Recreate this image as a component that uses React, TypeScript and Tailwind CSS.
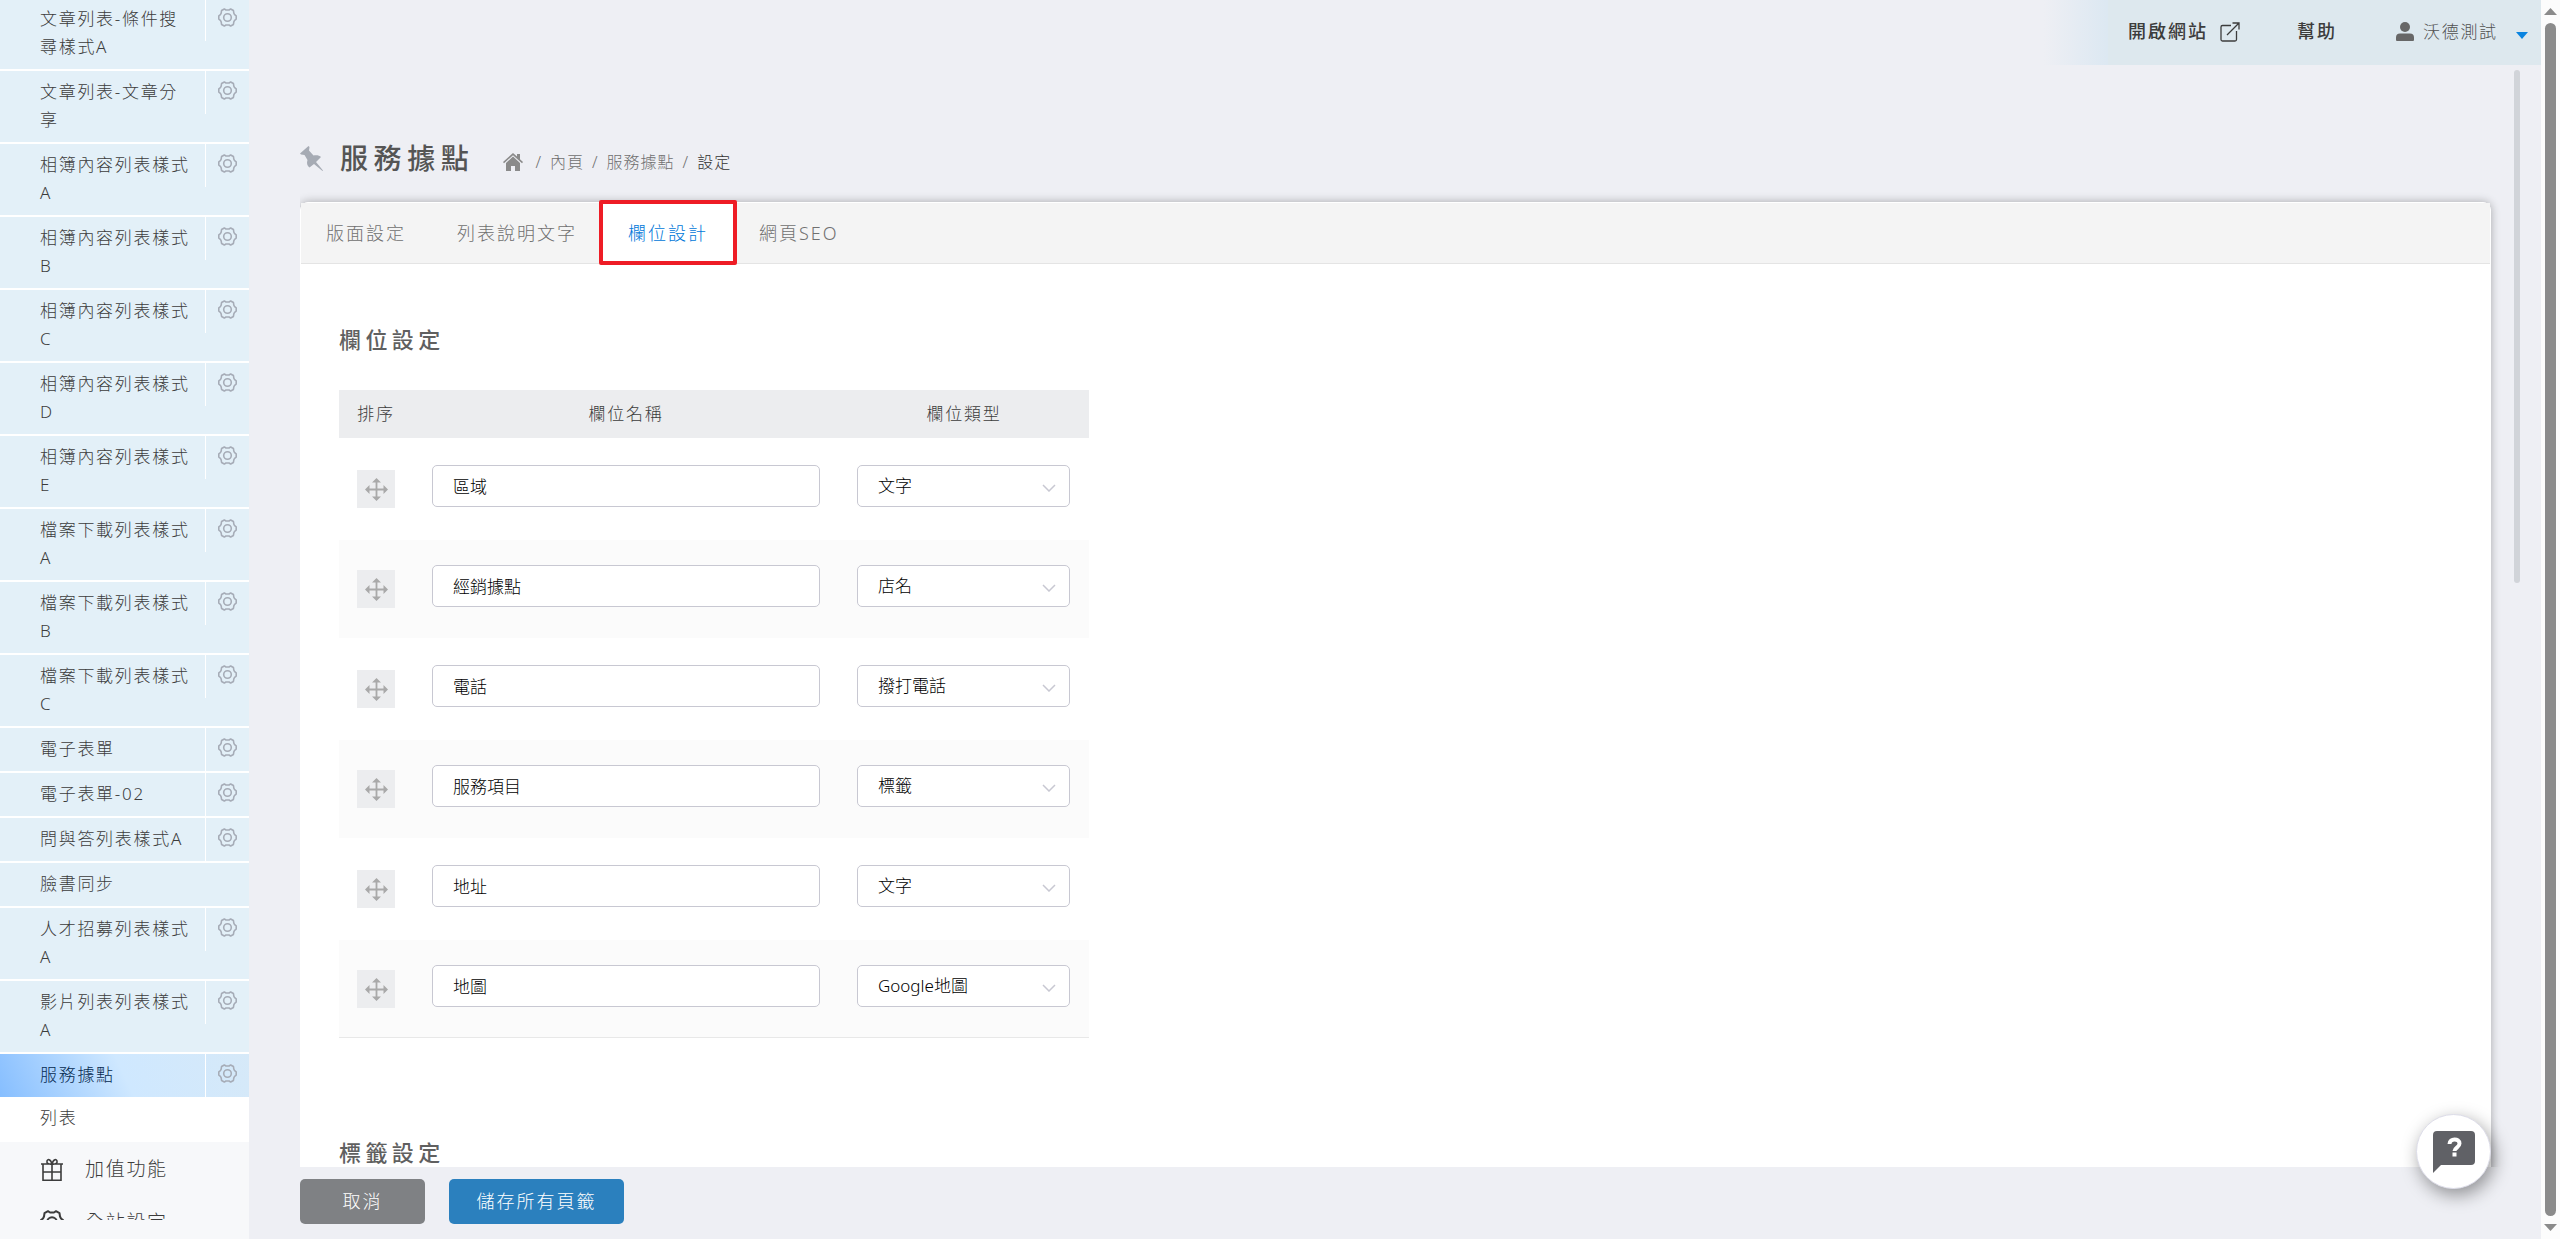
import type { ReactNode } from "react";

type MenuItem = { label: string; gear?: boolean; active?: boolean };

const menu: MenuItem[] = [
  { label: "文章列表-條件搜尋樣式A", gear: true },
  { label: "文章列表-文章分享", gear: true },
  { label: "相簿內容列表樣式A", gear: true },
  { label: "相簿內容列表樣式B", gear: true },
  { label: "相簿內容列表樣式C", gear: true },
  { label: "相簿內容列表樣式D", gear: true },
  { label: "相簿內容列表樣式E", gear: true },
  { label: "檔案下載列表樣式A", gear: true },
  { label: "檔案下載列表樣式B", gear: true },
  { label: "檔案下載列表樣式C", gear: true },
  { label: "電子表單", gear: true },
  { label: "電子表單-02", gear: true },
  { label: "問與答列表樣式A", gear: true },
  { label: "臉書同步" },
  { label: "人才招募列表樣式A", gear: true },
  { label: "影片列表列表樣式A", gear: true },
  { label: "服務據點", gear: true, active: true },
];

const fields = [
  { name: "區域", type: "文字" },
  { name: "經銷據點", type: "店名" },
  { name: "電話", type: "撥打電話" },
  { name: "服務項目", type: "標籤" },
  { name: "地址", type: "文字" },
  { name: "地圖", type: "Google地圖" },
];

const types = ["文字", "店名", "撥打電話", "標籤", "Google地圖"];

function Gear({ className }: { className?: string }) {
  return (
    <svg viewBox="0 0 24 24" className={className} fill="none" stroke="currentColor" strokeWidth="2" aria-hidden="true">
      <path d="M8 1.200 10 2.500h4l2-1.300 3.500 2 .5 3.300 1 2 2 1.500v4l-2 1.500-1 2-.5 3.300-3.500 2-2-1.300h-4l-2 1.300-3.500-2-.5-3.300-1-2-2-1.500v-4l2-1.500 1-2 .5-3.300z" strokeLinejoin="round" />
      <circle cx="12" cy="12" r="4.800" />
    </svg>
  );
}

function Sidebar() {
  return (
    <aside className="w-[249px] shrink-0 bg-[#f7f8fa] pb-[19px]">
      <nav className="h-full overflow-hidden text-[17px] leading-7 tracking-[0.1em] text-[#3c3c3c]">
        <ul className="-mt-0.5">
          {menu.map((m) => (
            <li
              key={m.label}
              className={
                m.active
                  ? "flex items-start bg-[linear-gradient(65deg,#86beff_0%,#cfe8ff_50%,#d6e9f8_100%)] text-[#062a50]"
                  : "flex items-start border-b-2 border-white bg-[#e3f0f8]"
              }
            >
              <a href="#" className="flex-1 pt-[7px] pb-2 pl-10 pr-3">{m.label}</a>
              {m.gear && (
                <button type="button" aria-label={m.label + " 設定"} className="flex h-[43px] w-11 items-center justify-center border-l border-white pr-px pb-1 text-[#a6acb7]">
                  <Gear className="size-[19px]" />
                </button>
              )}
            </li>
          ))}
        </ul>
        <a href="#" className="block bg-white pt-[7px] pb-2.5 pl-10">列表</a>
        <a href="#" className="flex h-[53px] items-center gap-[21px] pl-10 text-[19px]">
          <svg viewBox="0 0 24 24" className="size-6" fill="none" stroke="currentColor" strokeWidth="1.600" aria-hidden="true">
            <path d="M1 7h22M3 7v16.200h18V7M12 7v16M3 15h18M12 7C8 7.500 6.500 6 7 4s3.500-2.500 5 3c1.500-5.500 4.500-5 5-3s-1 3.500-5 3z" />
          </svg>
          加值功能
        </a>
        <a href="#" className="flex h-[53px] items-center gap-[21px] pl-10 text-[19px]">
          <Gear className="size-6" />
          全站設定
        </a>
      </nav>
    </aside>
  );
}

function TopBar() {
  return (
    <header className="flex h-[65px] shrink-0 justify-end text-[17px] text-[#3c3c3c]">
      <div className="w-16 bg-linear-to-r from-[#eeeff4] to-[#dce8f2]" />
      <div className="flex bg-[#dde8ee] pb-0.5">
        <a href="#" className="flex w-[169px] items-center gap-3 pl-5 text-[18px] font-medium tracking-[2px]">
          開啟網站
          <svg viewBox="0 0 20 20" className="size-5" fill="none" stroke="currentColor" strokeWidth="1.300" aria-hidden="true">
            <path d="M11 3.500H2.500a1.500 1.500 0 0 0-1.500 1.500v12.500A1.500 1.500 0 0 0 2.500 19H15a1.500 1.500 0 0 0 1.500-1.500V9M12.500 1H19v6.500M19 1 7 13" />
          </svg>
        </a>
        <a href="#" className="flex w-[95px] items-center pl-5 text-[18px] font-medium tracking-[2px]">幫助</a>
        <button type="button" className="flex w-[169px] items-center pl-6 tracking-[0.1em] text-[#505050]">
          <svg viewBox="0 0 18 19" className="mr-[9px] h-[19px] w-[18px] text-[#676767]" fill="currentColor" aria-hidden="true">
            <circle cx="9" cy="5" r="5" />
            <path d="M0 18v-2.500a4 4 0 0 1 4-4h10a4 4 0 0 1 4 4V18a1 1 0 0 1-1 1H1a1 1 0 0 1-1-1z" />
          </svg>
          沃德測試
          <svg viewBox="0 0 12 7" className="mt-2 ml-[18px] h-[7px] w-3 text-[#0a84e0]" fill="currentColor" aria-hidden="true">
            <path d="M0 0h12L6 7z" />
          </svg>
        </button>
      </div>
    </header>
  );
}

function Tab({ children, active }: { children: ReactNode; active?: boolean }) {
  return (
    <button
      type="button"
      role="tab"
      aria-selected={!!active}
      className={
        active
          ? "relative h-[60px] bg-white px-[25px] tracking-[2px] text-[#0077d9]"
          : "relative h-[60px] px-[25px] tracking-[2px] text-[#707070]"
      }
    >
      {children}
      {active && <span className="absolute -top-[3px] -right-1 -bottom-0.5 -left-1 rounded-xs border-4 border-[#ee1c25]" />}
    </button>
  );
}

function MoveIcon() {
  return (
    <svg viewBox="0 0 23 23" className="size-[23px]" aria-hidden="true">
      <path d="M11.500 3v17M3 11.500h17" stroke="currentColor" strokeWidth="1.800" />
      <path d="M11.500 0 16 4.500H7zM11.500 23 16 18.500H7zM0 11.500 4.500 7v9zM23 11.500 18.500 7v9z" fill="currentColor" />
    </svg>
  );
}

function FieldTable() {
  return (
    <table className="w-[750px] table-fixed border-collapse text-[17px]">
      <thead>
        <tr className="h-12 bg-[#ecedef] tracking-[0.1em] text-[#3c3c3c]">
          <th className="w-[74px] font-light">排序</th>
          <th className="w-[426px] font-light">欄位名稱</th>
          <th className="w-[250px] font-light">欄位類型</th>
        </tr>
      </thead>
      <tbody>
        {fields.map((f, i) => (
          <tr key={f.name} className="group h-[100px] align-top text-black">
            <td colSpan={3} className="p-0 pt-0.5">
              <div className="flex h-[98px] gap-[37px] pt-[25px] pl-[18px] group-even:bg-[#fbfbfb] group-last:border-b group-last:border-[#e8e8e8]">
                <button type="button" aria-label="拖曳排序" className="mt-[5px] flex size-[38px] items-center justify-center bg-[#ecedef] text-[#a9a9a9]">
                  <MoveIcon />
                </button>
                <input
                  aria-label={"欄位名稱 " + (i + 1)}
                  defaultValue={f.name}
                  className="h-[42px] w-[388px] rounded-[5px] border border-[#c8c8d2] bg-white px-5 pb-0.5 font-light"
                />
                <div className="relative">
                  <select
                    aria-label={"欄位類型 " + (i + 1)}
                    defaultValue={f.type}
                    className="h-[42px] w-[213px] appearance-none rounded-[5px] border border-[#c8c8d2] bg-white px-5 font-light"
                  >
                    {types.map((t) => (
                      <option key={t}>{t}</option>
                    ))}
                  </select>
                  <svg viewBox="0 0 14 8" className="pointer-events-none absolute top-[19px] right-3.5 h-2 w-3.5 text-[#c8c8d2]" fill="none" stroke="currentColor" strokeWidth="1.500" aria-hidden="true">
                    <path d="M1 1l6 6 6-6" />
                  </svg>
                </div>
              </div>
            </td>
          </tr>
        ))}
      </tbody>
    </table>
  );
}

export default function App() {
  return (
    <div className="flex h-screen overflow-hidden bg-[#eeeff4] font-['Noto_Sans','Noto_Sans_CJK_TC',sans-serif] font-light">
      <Sidebar />
      <div className="flex min-w-0 flex-1 flex-col">
        <TopBar />
        <div className="flex min-h-0 flex-1 pr-[21px]">
          <main className="flex min-w-0 flex-1 flex-col pl-[51px]">
            <div className="min-h-0 flex-1 overflow-hidden pt-[68px] pr-[23px]">
              <div className="flex h-[50px] items-center">
                <svg viewBox="0 0 23 25" className="h-[25px] w-[23px] text-[#a6abb4]" fill="currentColor" aria-hidden="true">
                  <path d="M8.500 0 9.500 1 9 4.500 13.500 9.500C17 9 19.500 9.500 21 11L16 16 23 24.500 22.500 25 14 18 9.500 21.500C7 19.500 6.500 17.500 7.500 14L4.500 9 1 8.500 0 7.500z" />
                </svg>
                <h1 className="ml-[17px] text-[28px] font-medium tracking-[0.2em] text-[#555]">服務據點</h1>
                <nav aria-label="breadcrumb" className="mt-2 ml-[29px] flex items-center gap-2 text-[16px] tracking-[1px] text-[#707070]">
                  <a href="#" aria-label="首頁" className="mr-1 text-[#8a8a8a]">
                    <svg viewBox="0 0 20 18" className="h-[18px] w-5" fill="currentColor" aria-hidden="true">
                      <path d="M10 0 0 9l1 1.200 9-8 9 8L20 9l-3-2.700V1h-3v2.600zM10 3.500 3 10v8h5v-5h4v5h5v-8z" />
                    </svg>
                  </a>
                  <span>/</span>
                  <a href="#">內頁</a>
                  <span>/</span>
                  <a href="#">服務據點</a>
                  <span>/</span>
                  <span className="text-[#333]">設定</span>
                </nav>
              </div>
              <section className="mt-[19px] rounded-t-lg border border-white bg-white shadow-[0_0_10px_rgba(0,0,0,0.3)]">
                <div role="tablist" className="flex gap-px border-b border-[#e4e4e4] bg-[#f4f4f4] text-[18px]">
                  <Tab>版面設定</Tab>
                  <Tab>列表說明文字</Tab>
                  <Tab active>欄位設計</Tab>
                  <Tab>網頁SEO</Tab>
                </div>
                <div className="px-[38px] pt-[59px] pb-40">
                  <h2 className="mb-[35px] text-[22px] leading-8 font-medium tracking-[0.2em] text-[#606060]">欄位設定</h2>
                  <FieldTable />
                  <h2 className="mt-[98px] text-[22px] leading-8 font-medium tracking-[0.2em] text-[#606060]">標籤設定</h2>
                </div>
              </section>
            </div>
            <footer className="flex gap-6 pt-3 pb-[15px] text-[18px] tracking-[2px] text-white">
              <button type="button" className="h-[45px] w-[125px] rounded-[5px] bg-[#7f8184]">取消</button>
              <button type="button" className="h-[45px] w-[175px] rounded-[5px] bg-[#2b80be]">儲存所有頁籤</button>
            </footer>
          </main>
          <div className="mt-[5px] h-[513px] w-1.5 rounded-full bg-[#d1d4d9]" />
        </div>
      </div>
      <div className="flex w-[19px] shrink-0 flex-col items-center bg-[#fcfcfc] pt-2 pb-2 text-[#8b8b8b]">
        <svg viewBox="0 0 13 7" className="h-[7px] w-[13px]" fill="currentColor" aria-hidden="true"><path d="M0 7h13L6.500 0z" /></svg>
        <div className="my-2 w-[11px] flex-1 rounded-full bg-[#8b8b8b]" />
        <svg viewBox="0 0 13 7" className="h-[7px] w-[13px]" fill="currentColor" aria-hidden="true"><path d="M0 0h13L6.500 7z" /></svg>
      </div>
      <button type="button" aria-label="說明" className="fixed right-[69px] bottom-[50px] flex size-[75px] items-center justify-center rounded-full border border-[#dcdce8] bg-white shadow-[3px_6px_18px_rgba(0,0,0,0.4)]">
        <svg viewBox="0 0 42 42" className="size-[42px] text-[#606166]" aria-hidden="true">
          <path d="M4 0h34a4 4 0 0 1 4 4v26a4 4 0 0 1-4 4H8L0 42V4a4 4 0 0 1 4-4z" fill="currentColor" />
          <path d="M16.500 13c0-6 10-6 10-.5 0 4-5 4-5 7.500M21.500 21.500v4" fill="none" stroke="#fff" strokeWidth="4" />
        </svg>
      </button>
    </div>
  );
}
